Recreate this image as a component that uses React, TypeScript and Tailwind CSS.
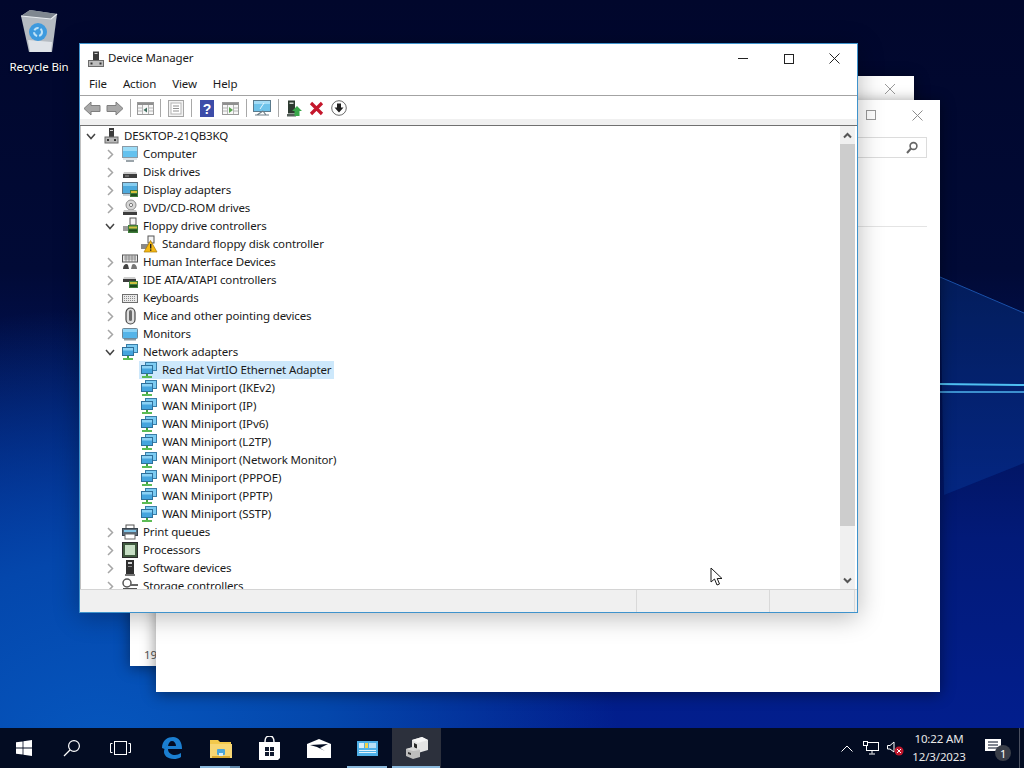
import React from "react";

type IconName =
  | "root" | "computer" | "disk" | "display" | "dvd" | "floppy" | "floppyWarn" | "hid" | "ide"
  | "keyboard" | "mouse" | "monitor" | "net" | "print" | "cpu" | "software" | "storage";

function TreeIcon({ name }: { name: IconName }) {
  const body: Record<IconName, React.ReactNode> = {
    root: (<>
      <rect x="7" y="1" width="5" height="9" fill="#3b3b3b" />
      <rect x="8" y="3" width="3" height="1" fill="#cfcfcf" />
      <rect x="3" y="10" width="13" height="6" fill="#b9b9b9" stroke="#6b6b6b" />
      <rect x="5" y="12" width="2" height="2" fill="#333" />
      <rect x="12" y="12" width="2" height="2" fill="#333" />
    </>),
    computer: (<>
      <rect x="1.5" y="1.5" width="15" height="11" fill="#63c1ee" stroke="#8a9aa6" />
      <rect x="2" y="2" width="14" height="4" fill="#9bdcf7" />
      <rect x="2" y="13" width="14" height="2" fill="#dfe6ea" />
      <rect x="5" y="15" width="8" height="2" fill="#9aa4aa" />
    </>),
    disk: (<>
      <path d="M3 9 L15 9 L16 11 L2 11 Z" fill="#c9c9c9" />
      <rect x="2" y="11" width="14" height="4" fill="#3c3c3c" />
      <rect x="4" y="12.5" width="4" height="1" fill="#9a9a9a" />
    </>),
    display: (<>
      <rect x="1.5" y="1.5" width="15" height="11" fill="#4da9dc" stroke="#5e7585" />
      <rect x="2" y="2" width="14" height="3" fill="#86cdf0" />
      <rect x="2" y="13" width="9" height="2" fill="#c8d2d8" />
      <rect x="9" y="9" width="8" height="7" fill="#3f7d3a" />
      <rect x="10" y="10" width="6" height="2" fill="#d5c13a" />
      <rect x="10" y="13" width="6" height="2" fill="#1f4f1d" />
    </>),
    dvd: (<>
      <circle cx="10" cy="6" r="5" fill="#d6d6d6" stroke="#8d8d8d" />
      <circle cx="10" cy="6" r="1.6" fill="#fff" stroke="#777" />
      <path d="M3 11 L15 11 L16 13 L2 13 Z" fill="#c4c4c4" />
      <rect x="2" y="13" width="14" height="3" fill="#3d3d3d" />
    </>),
    floppy: (<>
      <rect x="9" y="1" width="6" height="7" fill="#f4f4f4" stroke="#555" />
      <rect x="2" y="9" width="9" height="5" fill="#9c9c9c" />
      <rect x="7" y="8" width="10" height="8" fill="#3f7d3a" />
      <rect x="8" y="9.5" width="8" height="2" fill="#cfc23f" />
      <rect x="8" y="12.5" width="8" height="2" fill="#1d4a1b" />
    </>),
    floppyWarn: (<>
      <rect x="8" y="1" width="6" height="7" fill="#f4f4f4" stroke="#555" />
      <rect x="1" y="9" width="8" height="5" fill="#8a8a8a" />
      <path d="M10.5 5.5 L17 17 L4 17 Z" fill="#f5b915" stroke="#a87808" strokeWidth="0.7" />
      <rect x="10" y="9" width="1.4" height="4.5" fill="#222" />
      <rect x="10" y="14.4" width="1.4" height="1.4" fill="#222" />
    </>),
    hid: (<>
      <rect x="1.5" y="2" width="15" height="7" fill="#e8e8e8" stroke="#555" />
      <path d="M3 4h12M3 6h12M5 2v7M8 2v7M11 2v7M14 2v7" stroke="#777" strokeWidth="0.7" />
      <path d="M2 16 C2 11 6 10 7 12 L8 16 Z" fill="#444" />
      <path d="M16 16 C16 11 12 10 11 12 L10 16 Z" fill="#777" />
    </>),
    ide: (<>
      <path d="M3 6 L14 6 L15 8 L2 8 Z" fill="#cfcfcf" />
      <rect x="2" y="8" width="13" height="3" fill="#3b3b3b" />
      <rect x="8" y="10" width="9" height="7" fill="#3f7d3a" />
      <rect x="9" y="11" width="7" height="2" fill="#cfc23f" />
      <rect x="9" y="14" width="7" height="2" fill="#1d4a1b" />
    </>),
    keyboard: (<>
      <rect x="1.5" y="5.5" width="15" height="8" fill="#e9e9e9" stroke="#6e6e6e" />
      <path d="M3 7.5h12M3 9.5h12M3 11.5h12" stroke="#8b8b8b" strokeDasharray="1 1" />
    </>),
    mouse: (<>
      <rect x="5" y="1" width="9" height="16" rx="4.5" fill="#dedede" stroke="#444" strokeWidth="1.2" />
      <rect x="8" y="3" width="3" height="11" rx="1.5" fill="#6a6a6a" />
    </>),
    monitor: (<>
      <rect x="1.5" y="3.5" width="15" height="10" rx="1" fill="#55b4e8" stroke="#6f8796" />
      <rect x="2" y="4" width="14" height="3" fill="#8dd3f5" />
      <rect x="3" y="14" width="12" height="1.5" fill="#8f9ba2" />
    </>),
    net: (<>
      <rect x="5.5" y="1.5" width="11" height="8" fill="#7ccbf2" stroke="#3a7ea8" />
      <rect x="1.5" y="4.5" width="11" height="8" fill="#45a5de" stroke="#2f6f9a" />
      <rect x="2" y="5" width="10" height="2.5" fill="#8bd2f5" />
      <rect x="6" y="13" width="2" height="2" fill="#41a53f" />
      <rect x="2" y="15" width="10" height="2" fill="#5cbb55" />
    </>),
    print: (<>
      <rect x="5" y="2" width="8" height="4" fill="#fff" stroke="#555" />
      <rect x="1.5" y="5.5" width="15" height="7" fill="#5a6a78" stroke="#39444e" />
      <rect x="3" y="7" width="12" height="2" fill="#7fc4e6" />
      <rect x="4" y="11" width="10" height="5" fill="#fff" stroke="#666" />
    </>),
    cpu: (<>
      <rect x="1.5" y="1.5" width="15" height="15" fill="#3f5a3e" stroke="#2a2a2a" />
      <rect x="4" y="4" width="10" height="10" fill="#c7dfc4" />
    </>),
    software: (<>
      <rect x="5" y="1" width="8" height="14" fill="#2f2f2f" />
      <rect x="7" y="3" width="4" height="2" fill="#d4d4d4" />
      <rect x="7" y="7" width="4" height="1" fill="#888" />
      <rect x="4" y="15" width="10" height="2" fill="#777" />
    </>),
    storage: (<>
      <circle cx="6" cy="6" r="4" fill="none" stroke="#555" strokeWidth="1.5" />
      <rect x="9" y="7" width="8" height="2" fill="#666" />
      <rect x="2" y="11" width="14" height="4" fill="#555" />
    </>),
  };
  return (
    <svg width="18" height="18" viewBox="0 0 18 18" className="shrink-0">
      {body[name]}
    </svg>
  );
}

function Chevron({ open }: { open?: boolean }) {
  return (
    <svg width="14" height="18" viewBox="0 0 14 18" className="shrink-0">
      {open ? (
        <path d="M3 7 L7 11.5 L11 7" fill="none" stroke="#444" strokeWidth="1.5" />
      ) : (
        <path d="M5 5 L9.5 9.5 L5 14" fill="none" stroke="#a6a6a6" strokeWidth="1.5" />
      )}
    </svg>
  );
}

type Row = { label: string; icon: IconName; level: 0 | 1 | 2; state?: "open" | "closed"; selected?: boolean };

const rows: Row[] = [
  { label: "DESKTOP-21QB3KQ", icon: "root", level: 0, state: "open" },
  { label: "Computer", icon: "computer", level: 1, state: "closed" },
  { label: "Disk drives", icon: "disk", level: 1, state: "closed" },
  { label: "Display adapters", icon: "display", level: 1, state: "closed" },
  { label: "DVD/CD-ROM drives", icon: "dvd", level: 1, state: "closed" },
  { label: "Floppy drive controllers", icon: "floppy", level: 1, state: "open" },
  { label: "Standard floppy disk controller", icon: "floppyWarn", level: 2 },
  { label: "Human Interface Devices", icon: "hid", level: 1, state: "closed" },
  { label: "IDE ATA/ATAPI controllers", icon: "ide", level: 1, state: "closed" },
  { label: "Keyboards", icon: "keyboard", level: 1, state: "closed" },
  { label: "Mice and other pointing devices", icon: "mouse", level: 1, state: "closed" },
  { label: "Monitors", icon: "monitor", level: 1, state: "closed" },
  { label: "Network adapters", icon: "net", level: 1, state: "open" },
  { label: "Red Hat VirtIO Ethernet Adapter", icon: "net", level: 2, selected: true },
  { label: "WAN Miniport (IKEv2)", icon: "net", level: 2 },
  { label: "WAN Miniport (IP)", icon: "net", level: 2 },
  { label: "WAN Miniport (IPv6)", icon: "net", level: 2 },
  { label: "WAN Miniport (L2TP)", icon: "net", level: 2 },
  { label: "WAN Miniport (Network Monitor)", icon: "net", level: 2 },
  { label: "WAN Miniport (PPPOE)", icon: "net", level: 2 },
  { label: "WAN Miniport (PPTP)", icon: "net", level: 2 },
  { label: "WAN Miniport (SSTP)", icon: "net", level: 2 },
  { label: "Print queues", icon: "print", level: 1, state: "closed" },
  { label: "Processors", icon: "cpu", level: 1, state: "closed" },
  { label: "Software devices", icon: "software", level: 1, state: "closed" },
  { label: "Storage controllers", icon: "storage", level: 1, state: "closed" },
];

const levelPad = { 0: "pl-[3px]", 1: "pl-[22px]", 2: "pl-[41px]" } as const;

function TreeRow({ row }: { row: Row }) {
  return (
    <div className={`flex h-[18px] shrink-0 items-center ${levelPad[row.level]}`}>
      <div className="w-[14px] shrink-0">
        {row.state ? <Chevron open={row.state === "open"} /> : null}
      </div>
      <div className={`ml-[3px] flex h-[18px] items-center pl-[1px] pr-[3px] ${row.selected ? "bg-[#cde8fb]" : ""}`}>
        <TreeIcon name={row.icon} />
        <span className="ml-[4px] whitespace-nowrap text-[#1a1a1a]">{row.label}</span>
      </div>
    </div>
  );
}

function ToolBtn({ children }: { children: React.ReactNode }) {
  return <div className="flex h-[22px] w-[23px] shrink-0 items-center justify-center">{children}</div>;
}

function ToolSep({ wide }: { wide?: boolean }) {
  return (
    <div className={`flex h-[22px] shrink-0 items-center justify-center ${wide ? "w-[8px]" : "w-[7px]"}`}>
      <div className="h-[18px] w-px bg-[#a8a8a8]" />
    </div>
  );
}

function SheetIcon({ play }: { play?: "back" | "forward" }) {
  return (
    <svg width="17" height="16" viewBox="0 0 17 16">
      <rect x="0.5" y="2.5" width="16" height="12" fill="#f7f7f7" stroke="#9a9a9a" />
      <rect x="1" y="3" width="15" height="2" fill="#8f8f8f" />
      <path d="M5.5 5v9M11.5 5v9M1 8h4M1 11h4M12 8h4M12 11h4" stroke="#b5b5b5" />
      {play === "back" && <path d="M10 7.5 L6.5 10 L10 12.5 Z" fill="#3f6d5e" />}
      {play === "forward" && <path d="M7 7 L11 10 L7 13 Z" fill="#5aa64f" />}
    </svg>
  );
}

function Toolbar() {
  return (
    <div className="flex h-[23px] shrink-0 items-center pt-[1px]">
      <ToolBtn>
        <svg width="18" height="15" viewBox="0 0 18 15">
          <path d="M1 7.5 L8 1 L8 4.5 L17 4.5 L17 10.5 L8 10.5 L8 14 Z" fill="#a8a8a8" stroke="#7f7f7f" />
        </svg>
      </ToolBtn>
      <ToolBtn>
        <svg width="18" height="15" viewBox="0 0 18 15">
          <path d="M17 7.5 L10 1 L10 4.5 L1 4.5 L1 10.5 L10 10.5 L10 14 Z" fill="#a8a8a8" stroke="#7f7f7f" />
        </svg>
      </ToolBtn>
      <ToolSep wide />
      <ToolBtn><SheetIcon play="back" /></ToolBtn>
      <ToolSep />
      <ToolBtn>
        <svg width="16" height="17" viewBox="0 0 16 17">
          <rect x="0.5" y="0.5" width="15" height="16" fill="#f2f2f2" stroke="#a5a5a5" />
          <rect x="3" y="3" width="10" height="11" fill="#fff" stroke="#b5b5b5" />
          <path d="M5 6h6M5 8.5h6M5 11h6" stroke="#8f8f8f" />
        </svg>
      </ToolBtn>
      <ToolSep wide />
      <ToolBtn>
        <svg width="14" height="17" viewBox="0 0 14 17">
          <rect x="0" y="0" width="14" height="17" fill="#3d4ca8" />
          <text x="7" y="14" textAnchor="middle" fontSize="14" fontWeight="700" fill="#ffffff" fontFamily="Liberation Sans, sans-serif">?</text>
        </svg>
      </ToolBtn>
      <div className="w-px" />
      <ToolBtn><SheetIcon play="forward" /></ToolBtn>
      <div className="w-px" />
      <ToolSep />
      <ToolBtn>
        <svg width="18" height="16" viewBox="0 0 18 16">
          <rect x="0.5" y="0.5" width="17" height="11" fill="#6fc3ea" stroke="#5a7a8c" />
          <rect x="1" y="1" width="16" height="3" fill="#a4dcf6" />
          <path d="M10 11 L4 15 M10 11 L13 15 M2 15h14" stroke="#6f7f88" strokeWidth="1.2" />
          <path d="M11 3 L7 9" stroke="#e4f5fd" strokeWidth="1" />
        </svg>
      </ToolBtn>
      <div className="w-[2px]" />
      <ToolSep />
      <ToolBtn>
        <svg width="16" height="17" viewBox="0 0 16 17">
          <rect x="2" y="0.5" width="7" height="13" fill="#2d3a30" />
          <rect x="3.5" y="2.5" width="4" height="1.5" fill="#cfd6cf" />
          <rect x="1" y="14" width="9" height="2.5" fill="#55605a" />
          <path d="M11 6 L16 11 L13.5 11 L13.5 16 L8.5 16 L8.5 11 L6 11 Z" fill="#39a84a" />
        </svg>
      </ToolBtn>
      <ToolBtn>
        <svg width="15" height="15" viewBox="0 0 15 15">
          <path d="M2 2 L13 13 M13 2 L2 13" stroke="#c4172c" strokeWidth="3.2" />
        </svg>
      </ToolBtn>
      <div className="-ml-px">
        <ToolBtn>
          <svg width="16" height="16" viewBox="0 0 16 16">
            <circle cx="8" cy="8" r="7.3" fill="#ffffff" stroke="#6b6b6b" />
            <path d="M6 3.5 h4 v4 h2.5 L8 12.5 L3.5 7.5 H6 Z" fill="#1e1e1e" />
          </svg>
        </ToolBtn>
      </div>
    </div>
  );
}

function Scrollbar() {
  return (
    <div className="flex w-[15px] shrink-0 flex-col bg-[#f0f0f0]">
      <div className="flex h-[18px] items-center justify-center">
        <svg width="9" height="7" viewBox="0 0 9 7"><path d="M1 5.5 L4.5 2 L8 5.5" fill="none" stroke="#555" strokeWidth="2" /></svg>
      </div>
      <div className="h-[382px] bg-[#cdcdcd]" />
      <div className="flex-1" />
      <div className="flex h-[18px] items-center justify-center">
        <svg width="9" height="7" viewBox="0 0 9 7"><path d="M1 1.5 L4.5 5 L8 1.5" fill="none" stroke="#555" strokeWidth="2" /></svg>
      </div>
    </div>
  );
}

function DeviceManager() {
  return (
    <div className="absolute left-[79px] top-[43px] flex h-[570px] w-[779px] flex-col border border-[#3f93cc] bg-white shadow-[0_4px_24px_rgba(0,0,0,0.28)]">
      <div className="flex h-[29px] shrink-0 items-center">
        <div className="ml-[8px]">
          <svg width="16" height="16" viewBox="0 0 16 16">
            <rect x="5" y="0.5" width="6" height="9" fill="#3b3b3b" />
            <rect x="6.5" y="2" width="3" height="1" fill="#cfcfcf" />
            <rect x="0.5" y="9.5" width="15" height="6" fill="#bcbcbc" stroke="#6b6b6b" />
            <rect x="2.5" y="11.5" width="2" height="2" fill="#333" />
            <rect x="11.5" y="11.5" width="2" height="2" fill="#333" />
          </svg>
        </div>
        <span className="ml-[4px] pb-[2px] text-[#1a1a1a]">Device Manager</span>
        <div className="ml-auto flex h-full">
          <div className="flex w-[46px] items-center justify-center">
            <div className="h-px w-[10px] bg-[#222]" />
          </div>
          <div className="flex w-[45px] items-center justify-center">
            <div className="h-[10px] w-[10px] border border-[#222]" />
          </div>
          <div className="flex w-[46px] items-center justify-center">
            <svg width="11" height="11" viewBox="0 0 11 11"><path d="M0.5 0.5 L10.5 10.5 M10.5 0.5 L0.5 10.5" stroke="#222" /></svg>
          </div>
        </div>
      </div>
      <div className="flex h-[23px] shrink-0 items-center gap-[16px] border-b border-[#a3a3a3] pb-[1px] pl-[9px] text-[#1a1a1a]">
        <span>File</span>
        <span>Action</span>
        <span>View</span>
        <span>Help</span>
      </div>
      <Toolbar />
      <div className="h-[6px] shrink-0 bg-[#f0f0f0]" />
      <div className="flex min-h-0 flex-1 border-t border-[#707070]">
        <div className="flex min-w-0 flex-1 flex-col overflow-hidden border-l border-[#c0c0c0] pt-[1px]">
          {rows.map((r) => (
            <TreeRow key={r.label} row={r} />
          ))}
        </div>
        <Scrollbar />
        <div className="w-[2px] shrink-0" />
      </div>
      <div className="flex h-[23px] shrink-0 border-t border-[#d4d4d4] bg-[#f0f0f0]">
        <div className="w-[557px] border-r border-[#d9d9d9]" />
        <div className="w-[133px] border-r border-[#d9d9d9]" />
        <div className="w-[85px] border-r border-[#d9d9d9]" />
      </div>
    </div>
  );
}

function BackWindows() {
  return (
    <>
      <div className="absolute left-[130px] top-[76px] h-[590px] w-[784px] bg-white shadow-[0_2px_14px_rgba(0,0,0,0.45)]">
        <div className="flex h-[24px] justify-end pr-[18px] pt-[7px]">
          <svg width="12" height="12" viewBox="0 0 12 12"><path d="M1 1 L11 11 M11 1 L1 11" stroke="#9a9a9a" /></svg>
        </div>
        <div className="absolute bottom-[3px] left-[14px] text-[#555]">19</div>
      </div>
      <div className="absolute left-[156px] top-[100px] flex h-[592px] w-[784px] flex-col bg-white shadow-[0_2px_14px_rgba(0,0,0,0.45)]">
        <div className="flex h-[30px] shrink-0 items-center justify-end">
          <div className="mr-[36px] h-[10px] w-[10px] border border-[#9a9a9a]" />
          <div className="mr-[17px]">
            <svg width="11" height="11" viewBox="0 0 11 11"><path d="M0.5 0.5 L10.5 10.5 M10.5 0.5 L0.5 10.5" stroke="#8c8c8c" /></svg>
          </div>
        </div>
        <div className="ml-auto mr-[13px] mt-[7px] flex h-[21px] w-[240px] shrink-0 items-center justify-end border border-[#dcdcdc] pr-[7px]">
          <svg width="14" height="14" viewBox="0 0 14 14">
            <circle cx="8.5" cy="5" r="3.4" fill="none" stroke="#666" strokeWidth="1.6" />
            <path d="M6 7.5 L2 12" stroke="#666" strokeWidth="2" />
          </svg>
        </div>
        <div className="ml-auto mr-[13px] mt-[68px] h-px w-[600px] bg-[#e4e4e4]" />
      </div>
    </>
  );
}

function RecycleBin() {
  return (
    <div className="absolute left-0 top-[8px] flex w-[78px] flex-col items-center">
      <svg width="40" height="46" viewBox="0 0 40 46">
        <path d="M2 8 L11 2 L38 6 L33 44 L10 44 Z" fill="#b5bbc2" />
        <path d="M2 8 L11 2 L38 6 L32 11 Z" fill="#7f8790" />
        <path d="M2 8 L32 11 L38 6" fill="none" stroke="#e8ecf0" strokeWidth="1.2" />
        <path d="M9 32 L33 34 L32 44 L11 44 Z" fill="#dfe3e8" />
        <circle cx="19" cy="24" r="9" fill="#3e9ade" />
        <circle cx="19" cy="24" r="4" fill="none" stroke="#bfe2f7" strokeWidth="2" strokeDasharray="5 2" />
      </svg>
      <span className="mt-[4px] text-white [text-shadow:0_1px_2px_rgba(0,0,0,0.9)]">Recycle Bin</span>
    </div>
  );
}

function Wallpaper() {
  return (
    <svg className="absolute inset-0" width="1024" height="768" viewBox="0 0 1024 768">
      <polygon points="940,277 1024,313 1024,463 944,495" fill="#0a48b0" fillOpacity="0.3" />
      <path d="M940 277 L1024 313" stroke="#1a50a8" strokeWidth="1" />
      <path d="M940 384 L1024 385" stroke="#4fc0f2" strokeWidth="2" />
      <path d="M940 392 L1024 392" stroke="#4fb4ee" strokeWidth="1.5" />
    </svg>
  );
}

function Taskbar() {
  const btn = "relative flex h-[40px] w-[49px] shrink-0 items-center justify-center";
  return (
    <div className="absolute bottom-0 left-0 flex h-[40px] w-[1024px] items-center bg-[#030c22] text-[#e8e8e8]">
      <div className="flex h-[40px] w-[48px] shrink-0 items-center justify-center">
        <svg width="16" height="16" viewBox="0 0 16 16">
          <path d="M0 2.3 L6.6 1.4 V7.6 H0 Z M7.4 1.3 L16 0 V7.6 H7.4 Z M0 8.4 H6.6 V14.6 L0 13.7 Z M7.4 8.4 H16 V16 L7.4 14.7 Z" fill="#fff" />
        </svg>
      </div>
      <div className="flex h-[40px] w-[48px] shrink-0 items-center justify-center">
        <svg width="18" height="18" viewBox="0 0 18 18">
          <circle cx="11" cy="7" r="5.4" fill="none" stroke="#fff" strokeWidth="1.2" />
          <path d="M7 11 L1 17" stroke="#fff" strokeWidth="1.3" />
        </svg>
      </div>
      <div className="flex h-[40px] w-[48px] shrink-0 items-center justify-center">
        <svg width="21" height="14" viewBox="0 0 21 14">
          <rect x="4.5" y="0.5" width="12" height="13" fill="none" stroke="#fff" />
          <path d="M2.5 2.5 H0.5 V11.5 H2.5 M18.5 2.5 H20.5 V11.5 H18.5" fill="none" stroke="#fff" />
        </svg>
      </div>
      <div className="w-[3px] shrink-0" />
      <div className={btn}>
        <svg width="21" height="22" viewBox="0 0 21 22">
          <path d="M1 11 C1 3 7 0 12 0 C18 0 21 5 21 12 H7 C7 16 11 18 14 18 C16 18 18 17 20 16 V20 C18 21.5 15 22 13 22 C6 22 3 18 3 15 C3 12 4 10 6 8 C5 9 4 10 3.5 12 Z M7 9 H15 C15 6 13 4 11 4 C9 4 7.5 6 7 9 Z" fill="#1b7fd1" fillRule="evenodd" />
        </svg>
      </div>
      <div className={btn}>
        <svg width="22" height="19" viewBox="0 0 22 19">
          <path d="M0 1 H8 L10 3 H21 V6 H0 Z" fill="#f2c94c" />
          <rect x="0" y="5" width="22" height="14" fill="#f7d774" />
          <rect x="2" y="17" width="18" height="2" fill="#d9a92e" />
          <rect x="7" y="10" width="8" height="6" rx="1" fill="#4aa5d8" />
          <rect x="9" y="14" width="4" height="3" fill="#d6eef9" />
        </svg>
        <div className="absolute bottom-0 left-[4px] h-[2px] w-[30px] bg-[#8ab8dc]" />
        <div className="absolute bottom-0 left-[34px] h-[2px] w-[10px] bg-[#5f86a8]" />
      </div>
      <div className={btn}>
        <svg width="21" height="24" viewBox="0 0 21 24">
          <path d="M0 6 H21 V22 L19 24 H0 Z" fill="#fff" />
          <path d="M6 6 C6 1 8 0 10.5 0 C13 0 15 1 15 6" fill="none" stroke="#fff" strokeWidth="1.4" />
          <path d="M6 11 H10 V15 H6 Z M11 11 H15 V15 H11 Z M6 16 H10 V20 H6 Z M11 16 H15 V20 H11 Z" fill="#111a2f" />
        </svg>
      </div>
      <div className={btn}>
        <svg width="24" height="19" viewBox="0 0 24 19">
          <path d="M0 5 L12 0 L24 5 V19 H0 Z" fill="#fff" />
          <path d="M3 6 L21 5 L13 9 L18 12 L10 8 Z" fill="#030c22" />
        </svg>
      </div>
      <div className={btn}>
        <svg width="21" height="15" viewBox="0 0 21 15">
          <rect x="0" y="0" width="21" height="15" fill="#4fb0e8" />
          <rect x="2" y="2" width="5" height="5" fill="#d8eefb" />
          <rect x="8" y="2" width="3" height="5" fill="#f2d24a" />
          <rect x="12" y="2" width="7" height="5" fill="#b9e0f6" />
          <rect x="2" y="9" width="17" height="1" fill="#e3f3fc" />
          <rect x="2" y="11" width="17" height="1" fill="#e3f3fc" />
        </svg>
        <div className="absolute bottom-0 left-[4px] h-[2px] w-[40px] bg-[#8ab8dc]" />
      </div>
      <div className={`${btn} bg-[#2c303c]`}>
        <svg width="24" height="24" viewBox="0 0 24 24">
          <path d="M7 4 L17 1 L23 4 V14 L13 17 L7 14 Z" fill="#e4e4e4" />
          <path d="M7 4 L13 7 L23 4 L17 1 Z" fill="#f5f5f5" />
          <path d="M9 7 L12 8.5 V13 L9 11.5 Z" fill="#2a2a2a" />
          <path d="M1 13 L8 11 L15 14 V21 L8 23 L1 20 Z" fill="#bdbdbd" />
          <path d="M1 13 L8 15 L15 14 L8 11 Z" fill="#d8d8d8" />
          <path d="M3 16 L6 17 V19 L3 18 Z" fill="#333" />
        </svg>
        <div className="absolute bottom-0 left-0 h-[2px] w-[48px] bg-[#8ab8dc]" />
      </div>
      <div className="ml-auto flex h-[40px] items-center">
        <div className="flex h-[40px] w-[24px] items-center justify-center">
          <svg width="12" height="7" viewBox="0 0 12 7"><path d="M0.5 6.5 L6 1 L11.5 6.5" fill="none" stroke="#fff" /></svg>
        </div>
        <div className="flex h-[40px] w-[24px] items-center justify-center">
          <svg width="16" height="14" viewBox="0 0 16 14">
            <rect x="3.5" y="1.5" width="12" height="8" fill="none" stroke="#fff" />
            <rect x="0.5" y="0.5" width="4" height="4" fill="#030c22" stroke="#fff" />
            <path d="M9 10 V12.5 M6 13 H12" stroke="#fff" />
          </svg>
        </div>
        <div className="flex h-[40px] w-[24px] items-center justify-center">
          <svg width="17" height="16" viewBox="0 0 17 16">
            <path d="M0.5 5.5 H3 L7 2 V12 L3 9 H0.5 Z" fill="none" stroke="#fff" />
            <circle cx="12" cy="11" r="4.5" fill="#c0172c" />
            <path d="M10 9 L14 13 M14 9 L10 13" stroke="#fff" />
          </svg>
        </div>
        <div className="flex w-[64px] flex-col items-center leading-[18px]">
          <span>10:22 AM</span>
          <span>12/3/2023</span>
        </div>
        <div className="relative flex h-[40px] w-[48px] items-center justify-center">
          <svg width="18" height="15" viewBox="0 0 18 15" className="mr-[2px] mt-[-3px]">
            <path d="M0 0 H16 V12 H0 Z" fill="#fff" />
            <path d="M3 3 H13 M3 6 H13 M3 9 H13" stroke="#030c22" />
          </svg>
          <div className="absolute bottom-[7px] right-[8px] flex h-[16px] w-[16px] items-center justify-center rounded-full bg-[#3a3f49] text-[11px] leading-none text-white">1</div>
        </div>
        <div className="h-[40px] w-[5px] border-l border-[#4a5060]" />
      </div>
    </div>
  );
}

function Cursor() {
  return (
    <svg className="absolute left-[710px] top-[567px]" width="14" height="20" viewBox="0 0 14 20">
      <path d="M1 1 L1 15 L4.5 12 L7 18 L9.5 17 L7.2 11.5 L12 11.5 Z" fill="#fff" stroke="#1a1a1a" strokeWidth="1" />
    </svg>
  );
}

export default function App() {
  return (
    <div className="relative h-[768px] w-[1024px] overflow-hidden bg-[radial-gradient(ellipse_520px_460px_at_100px_768px,#0658c0_0%,#0447ac_45%,rgba(3,40,140,0)_100%),linear-gradient(to_bottom,#01072c_0%,#010a36_35%,#021a78_70%,#021f92_100%)] font-['Noto_Sans',sans-serif] text-[11.5px] tracking-[-0.13px]">
      <Wallpaper />
      <RecycleBin />
      <BackWindows />
      <DeviceManager />
      <Cursor />
      <Taskbar />
    </div>
  );
}
